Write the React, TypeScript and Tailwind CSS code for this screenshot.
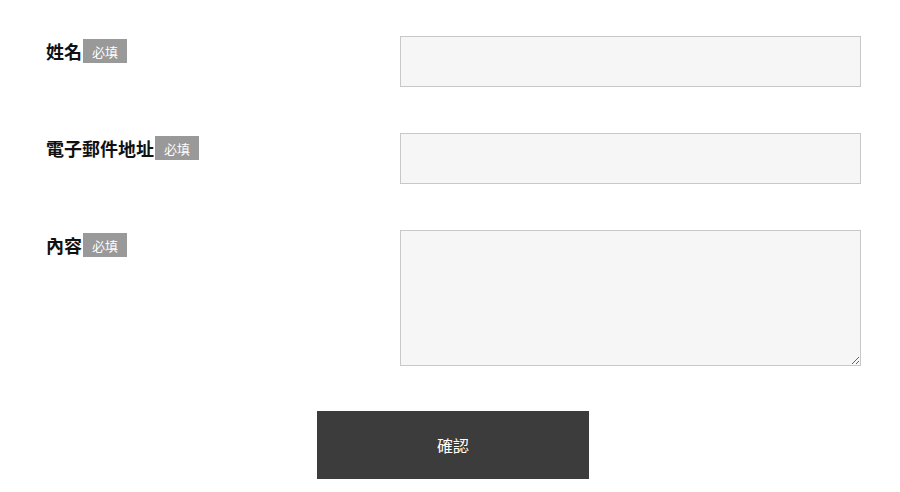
const fields = [
  { label: "姓名", type: "input" },
  { label: "電子郵件地址", type: "input" },
  { label: "內容", type: "textarea" },
];

function Badge() {
  return (
    <span className="ml-px inline-flex h-6 items-center bg-[#999999] px-[9px] text-[13px] font-normal leading-none text-white">
      必填
    </span>
  );
}

export default function App() {
  return (
    <div
      className="min-h-[492px] w-[900px] bg-white pt-9 pr-[39px] pl-[46px]"
      style={{ fontFamily: '"Noto Sans CJK TC", "Noto Sans", sans-serif' }}
    >
      <form className="flex flex-col gap-[46px]">
        {fields.map((f) => (
          <div key={f.label} className="flex">
            <div className="flex h-[30px] w-[354px] items-center text-[18px] font-bold text-[#111111]">
              <span>{f.label}</span>
              <Badge />
            </div>
            {f.type === "input" ? (
              <input
                type="text"
                className="block h-[51px] w-[461px] border border-[#c8c8c8] bg-[#f6f6f6] px-3 outline-none"
              />
            ) : (
              <textarea className="block h-[136px] w-[461px] border border-[#c8c8c8] bg-[#f6f6f6] px-3 py-2 outline-none" />
            )}
          </div>
        ))}
        <div className="flex pl-[271px]">
          <button
            type="button"
            className="-mt-px h-[68px] w-[272px] bg-[#3c3c3c] text-[16px] text-white"
          >
            確認
          </button>
        </div>
      </form>
    </div>
  );
}
